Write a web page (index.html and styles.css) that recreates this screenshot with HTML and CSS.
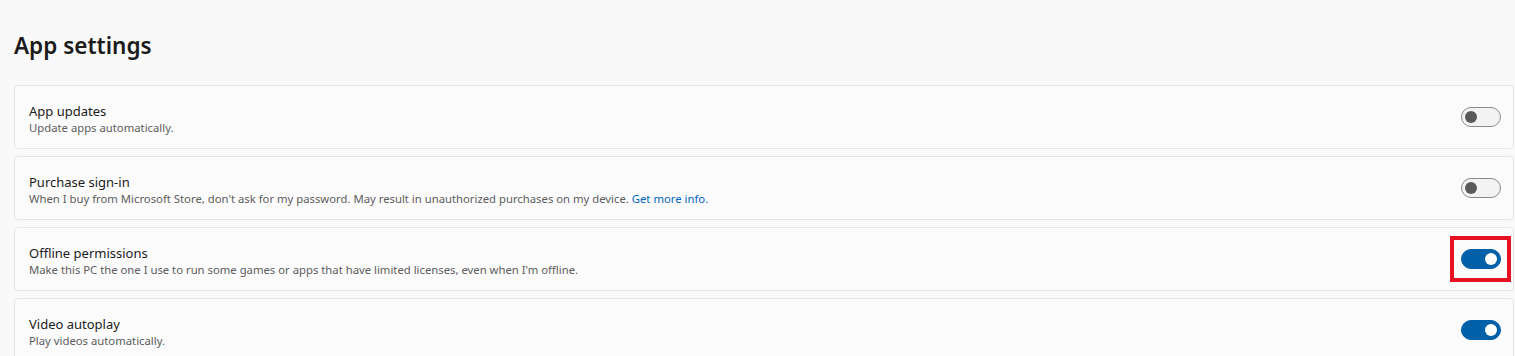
FILE: index.html
```html
<!DOCTYPE html>
<html lang="en">
<head>
  <meta charset="UTF-8">
  <meta name="viewport" content="width=device-width, initial-scale=1.0">
  <title>App settings</title>
  <link rel="stylesheet" href="styles.css">
</head>
<body>
  <h1 class="page-title">App settings</h1>
  <div class="settings-list">
    <div class="setting-card">
      <div class="setting-text">
        <div class="setting-name">App updates</div>
        <div class="setting-desc">Update apps automatically.</div>
      </div>
      <div class="toggle-wrap">
        <div class="toggle"><span class="knob"></span></div>
      </div>
    </div>
    <div class="setting-card">
      <div class="setting-text">
        <div class="setting-name">Purchase sign-in</div>
        <div class="setting-desc">When I buy from Microsoft Store, don't ask for my password. May result in unauthorized purchases on my device. <a class="link" href="#">Get more info.</a></div>
      </div>
      <div class="toggle-wrap">
        <div class="toggle"><span class="knob"></span></div>
      </div>
    </div>
    <div class="setting-card">
      <div class="setting-text">
        <div class="setting-name">Offline permissions</div>
        <div class="setting-desc">Make this PC the one I use to run some games or apps that have limited licenses, even when I'm offline.</div>
      </div>
      <div class="toggle-wrap highlight">
        <div class="toggle on"><span class="knob"></span></div>
      </div>
    </div>
    <div class="setting-card">
      <div class="setting-text">
        <div class="setting-name">Video autoplay</div>
        <div class="setting-desc">Play videos automatically.</div>
      </div>
      <div class="toggle-wrap">
        <div class="toggle on"><span class="knob"></span></div>
      </div>
    </div>
  </div>
</body>
</html>
```

FILE: styles.css
```css
body {
  margin: 0;
  background-color: #f9f9f9;
  font-family: 'Noto Sans', 'Open Sans', sans-serif;
  color: #1b1b1b;
  overflow: hidden;
}

.page-title {
  margin: 0;
  padding: 32px 0 0 14px;
  height: 54px;
  font-size: 22.5px;
  font-weight: 600;
  line-height: 28px;
  box-sizing: border-box;
}

.settings-list {
  display: flex;
  flex-direction: column;
  gap: 7px;
  margin: 31px 1px 0 14px;
}

.setting-card {
  display: flex;
  align-items: center;
  justify-content: space-between;
  height: 64px;
  box-sizing: border-box;
  padding: 3px 13px 0 14px;
  background-color: #fbfbfb;
  border: 1px solid #e5e5e5;
  border-radius: 4px;
}

.setting-name {
  font-size: 13px;
  line-height: 18px;
}

.setting-desc {
  font-size: 11.3px;
  line-height: 16px;
  color: #5d5d5d;
}

.link {
  color: #0067c0;
  text-decoration: none;
}

.toggle-wrap {
  display: flex;
  align-items: center;
  justify-content: center;
  width: 61px;
  height: 46px;
  box-sizing: border-box;
  border: 4px solid transparent;
  margin: -3px -11px 0 0;
}

.toggle-wrap.highlight {
  border-color: #e81123;
}

.toggle {
  display: flex;
  align-items: center;
  width: 40px;
  height: 20px;
  box-sizing: border-box;
  padding: 0 3px;
  border: 1px solid #8a8a8a;
  border-radius: 10px;
  background-color: #f3f3f3;
}

.knob {
  width: 12px;
  height: 12px;
  border-radius: 50%;
  background-color: #5a5a5a;
}

.toggle.on {
  justify-content: flex-end;
  border-color: #0060a8;
  background-color: #0060a8;
}

.toggle.on .knob {
  background-color: #ffffff;
}
```
